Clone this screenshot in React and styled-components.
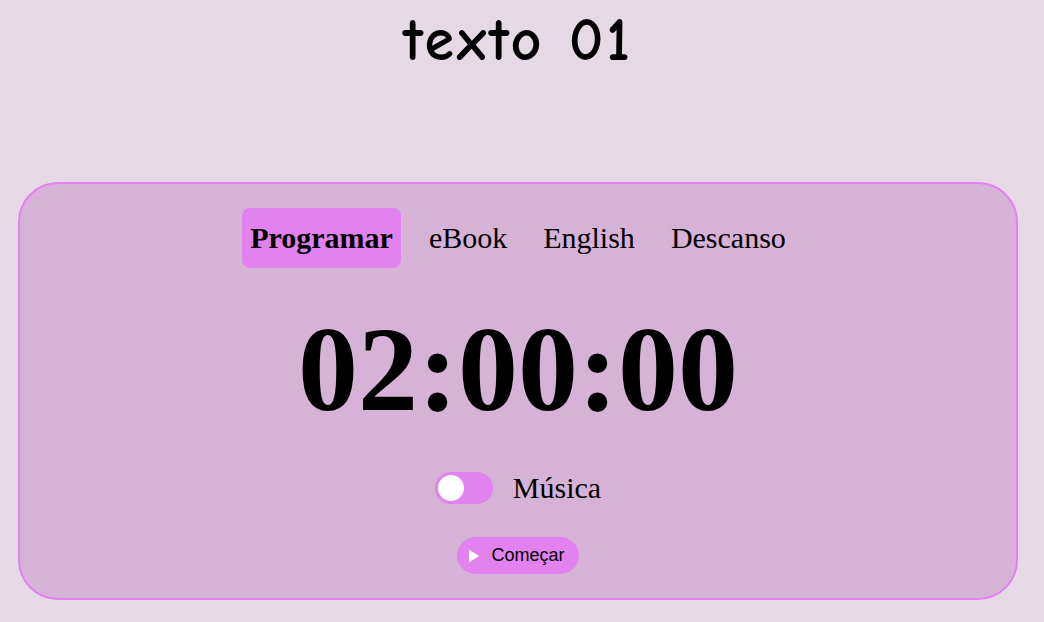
import React, { useState } from "react";
import styled, { createGlobalStyle } from "styled-components";

const Global = createGlobalStyle`
  html, body { margin: 0; padding: 0; }
  body {
    background: #e6d9e6;
    font-family: "Liberation Serif", "Times New Roman", serif;
    color: #000;
  }
`;

const Page = styled.div`
  width: 1000px;
  margin-left: 18px;
  display: flex;
  flex-direction: column;
  align-items: center;
`;

const Title = styled.h1`
  margin: 8px 0 0;
  height: 174px;
  font-family: "Comic Sans MS", "Comic Neue", "DejaVu Sans", sans-serif;
  font-weight: 700;
  font-size: 60px;
  line-height: 66px;
  letter-spacing: 3px;
`;

const Card = styled.section`
  box-sizing: border-box;
  width: 1000px;
  height: 418px;
  border: 2px solid #e182ee;
  border-radius: 40px;
  background: #d6b3d6;
  display: flex;
  flex-direction: column;
  align-items: center;
  padding-top: 24px;
`;

const Tabs = styled.nav`
  display: flex;
  gap: 20px;
`;

const Tab = styled.button`
  border: none;
  border-radius: 8px;
  padding: 0 8px;
  height: 60px;
  font-family: "Liberation Serif", serif;
  font-size: 30px;
  font-weight: ${(p) => (p.$active ? 700 : 400)};
  background: ${(p) => (p.$active ? "#e182ee" : "transparent")};
  color: #000;
  cursor: pointer;
`;

const Timer = styled.div`
  margin-top: 32px;
  font-family: "Liberation Serif", serif;
  font-weight: 700;
  font-size: 120px;
  line-height: 140px;
`;

const MusicRow = styled.label`
  margin-top: 31px;
  display: flex;
  align-items: center;
  gap: 20px;
  font-family: "Liberation Serif", serif;
  font-size: 30px;
  cursor: pointer;
`;

const Switch = styled.span`
  position: relative;
  width: 58px;
  height: 32px;
  border-radius: 16px;
  background: #e182ee;
  display: inline-block;
`;

const Knob = styled.span`
  position: absolute;
  top: 3px;
  left: ${(p) => (p.$on ? "29px" : "3px")};
  width: 26px;
  height: 26px;
  border-radius: 50%;
  background: radial-gradient(circle at 45% 35%, #ffffff 55%, #e6e6e6 100%);
`;

const StartButton = styled.button`
  margin-top: 32px;
  height: 37px;
  border: none;
  border-radius: 19px;
  background: #e182ee;
  padding: 0 14px 0 12px;
  display: flex;
  align-items: center;
  gap: 12px;
  font-family: "Liberation Sans", Arial, sans-serif;
  font-size: 18px;
  color: #000;
  cursor: pointer;
`;

const tabs = ["Programar", "eBook", "English", "Descanso"];

export default function App() {
  const [active, setActive] = useState(0);
  const [music, setMusic] = useState(false);
  return (
    <>
      <Global />
      <Page>
        <Title>texto 01</Title>
        <Card>
          <Tabs>
            {tabs.map((t, i) => (
              <Tab key={t} $active={i === active} onClick={() => setActive(i)}>
                {t}
              </Tab>
            ))}
          </Tabs>
          <Timer>02:00:00</Timer>
          <MusicRow onClick={() => setMusic(!music)}>
            <Switch>
              <Knob $on={music} />
            </Switch>
            Música
          </MusicRow>
          <StartButton>
            <svg width="10" height="14" viewBox="0 0 10 14">
              <path d="M0 0.5 L10 7 L0 13.5 Z" fill="#fff" />
            </svg>
            Começar
          </StartButton>
        </Card>
      </Page>
    </>
  );
}
